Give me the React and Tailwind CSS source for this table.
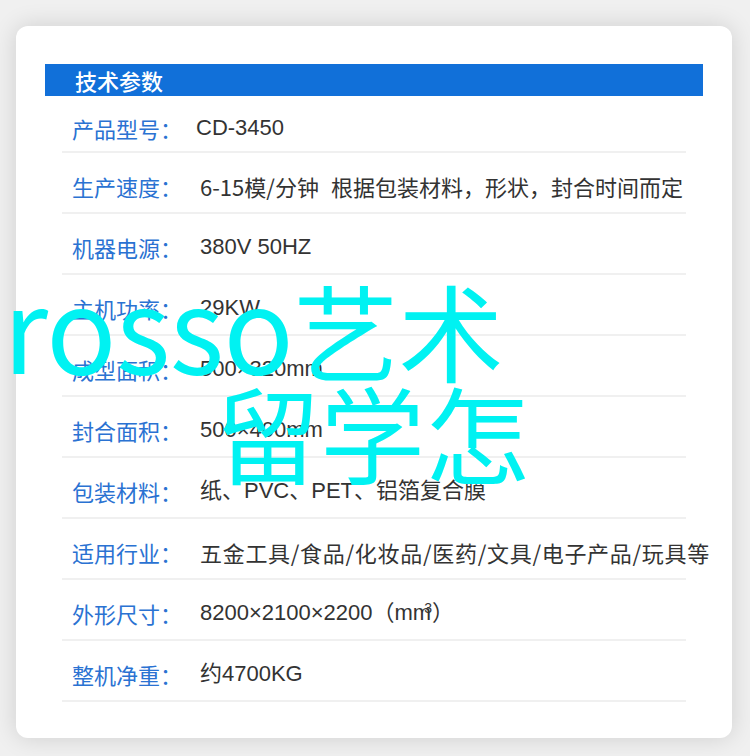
import React from "react";

const rows = [
  { label: "产品型号：", value: "CD-3450", off: "ml-[-4px]" },
  { label: "生产速度：", value: "speed", cjk: true },
  { label: "机器电源：", value: "380V 50HZ" },
  { label: "主机功率：", value: "29KW" },
  { label: "成型面积：", value: "500×320mm" },
  { label: "封合面积：", value: "500×400mm" },
  { label: "包装材料：", value: "纸、PVC、PET、铝箔复合膜" },
  { label: "适用行业：", value: "五金工具/食品/化妆品/医药/文具/电子产品/玩具等", cjk: true, track: "tracking-[0.7px]" },
  { label: "外形尺寸：", value: "dims" },
  { label: "整机净重：", value: "约4700KG" },
];

function Value({ v }) {
  if (v === "dims")
    return (
      <span>
        8200×2100×2200（mm
        <sup className="ml-[-7px] text-[14px]">3</sup>）
      </span>
    );
  if (v === "speed")
    return (
      <span>
        6-15模/分钟<span className="ml-[12px]">根据包装材料，形状，封合时间而定</span>
      </span>
    );
  return v;
}

export default function App() {
  return (
    <div className="relative w-[750px] h-[756px] overflow-hidden bg-[#f0f0f0] pt-[26px] pl-[16px]">
      <div className="w-[716px] h-[712px] rounded-[12px] bg-white shadow-[0_0_24px_rgba(0,0,0,0.14)] pt-[38px] px-[29px]">
        <div className="h-[32px] bg-[#1170d9] flex items-center pl-[30px]">
          <span className="text-white text-[22px] font-medium leading-none font-['Noto_Sans_CJK_SC',sans-serif]">
            技术参数
          </span>
        </div>
        <div className="mx-[17px]">
          {rows.map((r, i) => (
            <div
              key={i}
              className={`flex items-center border-b-2 border-[#f0f0f0] pl-[10px] ${
                i === 0 ? "h-[57px] pt-[9px]" : "h-[61px] pt-[7px]"
              }`}
            >
              <div className="w-[128px] shrink-0 text-[22px] leading-none text-[#2a72d2] font-['Noto_Sans_CJK_SC',sans-serif] whitespace-nowrap">
                {r.label}
              </div>
              <div
                className={`${r.off || ""} ${r.track || ""} text-[22px] leading-none text-[#333333] whitespace-nowrap ${
                  r.cjk
                    ? "font-['Noto_Sans_CJK_SC',sans-serif]"
                    : "font-['Liberation_Sans','Noto_Sans_CJK_SC',sans-serif]"
                }`}
              >
                <Value v={r.value} />
              </div>
            </div>
          ))}
        </div>
      </div>
      <div className="absolute left-[3px] top-[265px] leading-none text-[#00f2f2] whitespace-nowrap font-['Noto_Sans_CJK_SC',sans-serif]">
        <span className="text-[116px] tracking-[-0.5px]">rosso</span>
        <span className="text-[105px]">艺术</span>
      </div>
      <div className="absolute left-[215px] top-[378px] text-[105px] leading-none text-[#00f2f2] whitespace-nowrap font-['Noto_Sans_CJK_SC',sans-serif]">
        留学怎
      </div>
    </div>
  );
}
